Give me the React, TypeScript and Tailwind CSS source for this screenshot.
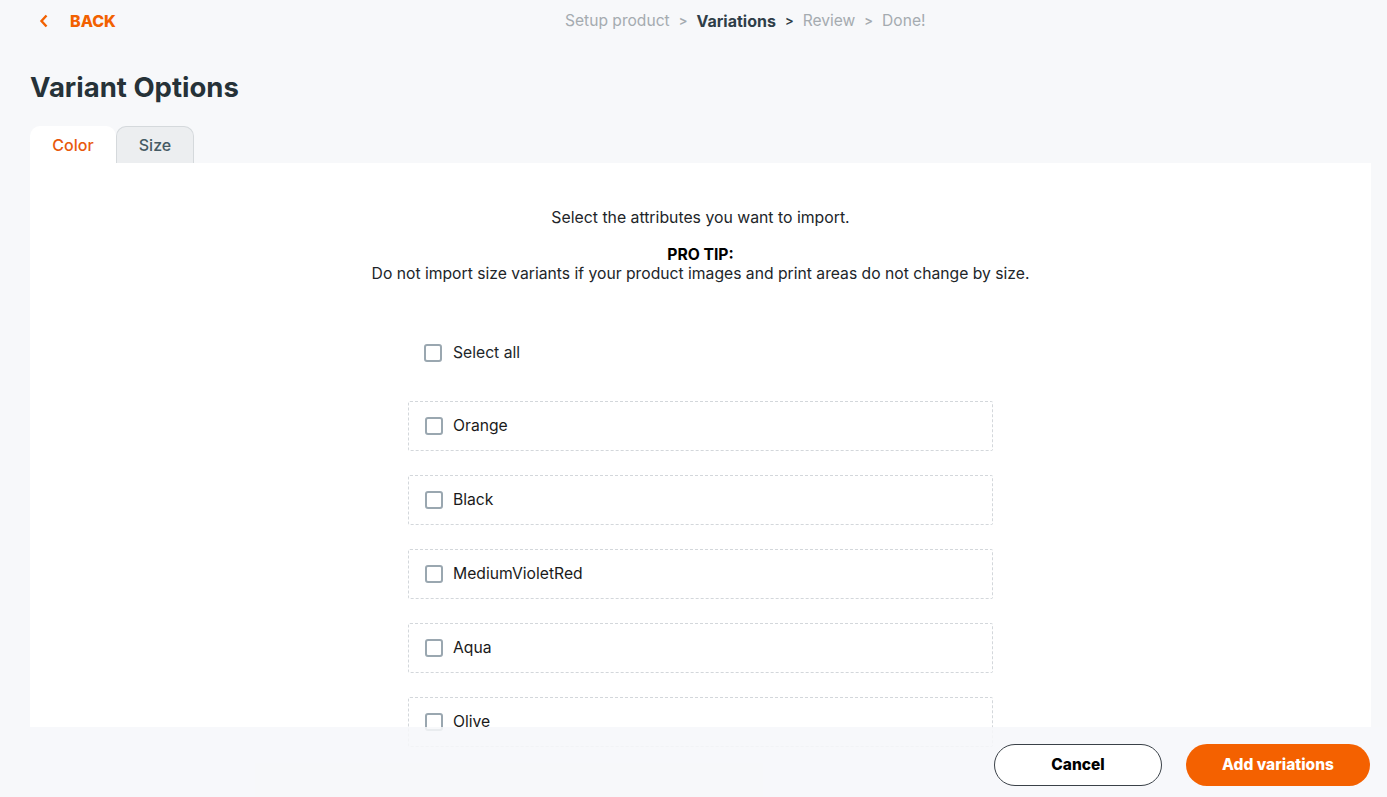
import React, { useState } from 'react';

const colors = ['Orange', 'Black', 'MediumVioletRed', 'Aqua', 'Olive'];

const Checkbox = ({ checked, onChange }: { checked: boolean; onChange: () => void }) => (
  <button
    type="button"
    onClick={onChange}
    className={`w-[18px] h-[18px] shrink-0 rounded-[3px] border-2 flex items-center justify-center ${
      checked ? 'bg-[#f26100] border-[#f26100]' : 'bg-white border-[#9aa7b0]'
    }`}
  >
    {checked && (
      <svg viewBox="0 0 12 12" className="w-3 h-3" fill="none" stroke="white" strokeWidth="2">
        <path d="M2 6.5l2.5 2.5L10 3.5" />
      </svg>
    )}
  </button>
);

const App = () => {
  const [tab, setTab] = useState<'color' | 'size'>('color');
  const [selected, setSelected] = useState<string[]>([]);

  const toggle = (c: string) =>
    setSelected((prev) => (prev.includes(c) ? prev.filter((x) => x !== c) : [...prev, c]));
  const allSelected = selected.length === colors.length;

  return (
    <div
      className="h-[797px] overflow-hidden bg-[#f7f8fa] flex flex-col pl-[30px] pr-4 text-[#212529]"
      style={{ fontFamily: 'Inter, "Noto Sans", sans-serif' }}
    >
      {/* top bar */}
      <div className="h-[42px] flex items-center relative shrink-0">
        <button className="flex items-center text-[#f26100] font-extrabold text-[16px] ml-[9px]">
          <svg viewBox="0 0 10 14" className="w-[10px] h-[14px]" fill="none" stroke="currentColor" strokeWidth="2.4">
            <path d="M7.5 1.5L2.5 7l5 5.5" />
          </svg>
          <span className="ml-[21px]">BACK</span>
        </button>
        <div className="absolute left-[535px] flex items-center gap-[9px] text-[15.6px] text-[#a5abb0]">
          <span>Setup product</span>
          <span className="text-[13px] font-semibold">&gt;</span>
          <span className="font-bold text-[16px] text-[#2f3e48]">Variations</span>
          <span className="text-[13px] font-semibold text-[#2f3e48]">&gt;</span>
          <span>Review</span>
          <span className="text-[13px] font-semibold">&gt;</span>
          <span>Done!</span>
        </div>
      </div>

      <h1 className="mt-[27px] text-[27.5px] font-bold text-[#263238] leading-[36px]">Variant Options</h1>

      {/* tabs */}
      <div className="mt-[21px] flex h-[37px] shrink-0">
        <button
          onClick={() => setTab('color')}
          className={`w-[86px] rounded-t-[10px] text-[16px] font-medium ${
            tab === 'color' ? 'bg-white text-[#e8590c]' : 'bg-[#eceef0] text-[#455a64] border border-b-0 border-[#d5d9dc]'
          }`}
        >
          Color
        </button>
        <button
          onClick={() => setTab('size')}
          className={`w-[78px] rounded-t-[10px] text-[16px] font-medium ${
            tab === 'size' ? 'bg-white text-[#e8590c]' : 'bg-[#eceef0] text-[#455a64] border border-b-0 border-[#d5d9dc]'
          }`}
        >
          Size
        </button>
      </div>

      {/* panel */}
      <div className="h-[564px] shrink-0 bg-white flex flex-col items-center">
        <p className="mt-[44px] text-[15.8px] leading-[22px]">Select the attributes you want to import.</p>
        <p className="mt-[16px] text-[15.7px] font-bold leading-[19px] text-black">PRO TIP:</p>
        <p className="text-[15.7px] leading-[19px]">
          Do not import size variants if your product images and print areas do not change by size.
        </p>

        <div className="mt-[52px] w-[585px] flex flex-col">
          <label className="flex items-center gap-[11px] pl-4 h-[36px] text-[15.7px]">
            <Checkbox
              checked={allSelected}
              onChange={() => setSelected(allSelected ? [] : [...colors])}
            />
            <span>Select all</span>
          </label>
          <div className="mt-[30px] flex flex-col gap-6">
            {colors.map((c) => (
              <label
                key={c}
                className="h-[50px] border border-dashed border-[#d3d7db] rounded-[2px] flex items-center gap-[10px] pl-4 text-[15.7px] text-[#1a1a1a]"
              >
                <Checkbox checked={selected.includes(c)} onChange={() => toggle(c)} />
                <span>{c}</span>
              </label>
            ))}
          </div>
        </div>
      </div>

      {/* footer */}
      <div className="relative h-[71px] shrink-0 bg-[#f7f8fa]/85 flex items-start pt-[17px] justify-end gap-6 -mr-4 pr-[17px]">
        <button className="w-[168px] h-[42px] rounded-full border border-[#3a4148] bg-white text-[15.5px] font-extrabold text-black">
          Cancel
        </button>
        <button className="w-[184px] h-[42px] rounded-full bg-[#f46100] text-[15.5px] font-extrabold text-white">
          Add variations
        </button>
      </div>
    </div>
  );
};

export default App;
